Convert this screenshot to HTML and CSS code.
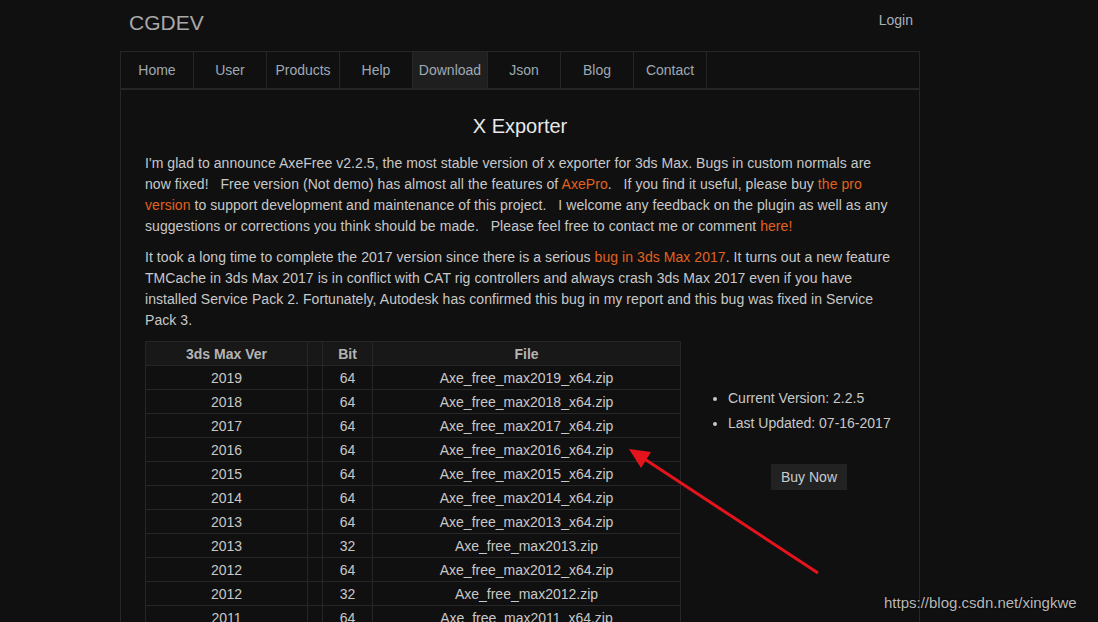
FILE: index.html
```html
<!DOCTYPE html>
<html lang="en">
<head>
  <meta charset="UTF-8" />
  <title>X Exporter - CGDEV</title>
  <link rel="stylesheet" href="styles.css">
</head>
<body>

<div class="wrap">
  <div class="header">
    <div class="logo">CGDEV</div>
    <a class="login" href="#">Login</a>
  </div>

  <div class="nav">
    <a href="#">Home</a>
    <a href="#">User</a>
    <a href="#">Products</a>
    <a href="#">Help</a>
    <a href="#" class="active">Download</a>
    <a href="#">Json</a>
    <a href="#">Blog</a>
    <a href="#">Contact</a>
  </div>

  <div class="panel">
    <h2>X Exporter</h2>
    <p>I'm glad to announce AxeFree v2.2.5, the most stable version of x exporter for 3ds Max. Bugs in custom normals are now fixed! &nbsp; Free version (Not demo) has almost all the features of <a href="#">AxePro</a>. &nbsp; If you find it useful, please buy <a href="#">the pro version</a> to support development and maintenance of this project. &nbsp; I welcome any feedback on the plugin as well as any suggestions or corrections you think should be made. &nbsp; Please feel free to contact me or comment <a href="#">here!</a></p>
    <p>It took a long time to complete the 2017 version since there is a serious <a href="#">bug in 3ds Max 2017</a>. It turns out a new feature TMCache in 3ds Max 2017 is in conflict with CAT rig controllers and always crash 3ds Max 2017 even if you have installed Service Pack 2. Fortunately, Autodesk has confirmed this bug in my report and this bug was fixed in Service Pack 3.</p>

    <div class="download">
      <table class="files">
        <tr><th class="c-ver">3ds Max Ver</th><th class="c-gap"></th><th class="c-bit">Bit</th><th>File</th></tr>
        <tr><td>2019</td><td></td><td>64</td><td>Axe_free_max2019_x64.zip</td></tr>
        <tr><td>2018</td><td></td><td>64</td><td>Axe_free_max2018_x64.zip</td></tr>
        <tr><td>2017</td><td></td><td>64</td><td>Axe_free_max2017_x64.zip</td></tr>
        <tr><td>2016</td><td></td><td>64</td><td>Axe_free_max2016_x64.zip</td></tr>
        <tr><td>2015</td><td></td><td>64</td><td>Axe_free_max2015_x64.zip</td></tr>
        <tr><td>2014</td><td></td><td>64</td><td>Axe_free_max2014_x64.zip</td></tr>
        <tr><td>2013</td><td></td><td>64</td><td>Axe_free_max2013_x64.zip</td></tr>
        <tr><td>2013</td><td></td><td>32</td><td>Axe_free_max2013.zip</td></tr>
        <tr><td>2012</td><td></td><td>64</td><td>Axe_free_max2012_x64.zip</td></tr>
        <tr><td>2012</td><td></td><td>32</td><td>Axe_free_max2012.zip</td></tr>
        <tr><td>2011</td><td></td><td>64</td><td>Axe_free_max2011_x64.zip</td></tr>
        <tr><td>2011</td><td></td><td>32</td><td>Axe_free_max2011.zip</td></tr>
      </table>

      <div class="info">
        <ul>
          <li>Current Version: 2.2.5</li>
          <li>Last Updated: 07-16-2017</li>
        </ul>
        <a class="buy" href="#">Buy Now</a>
      </div>
    </div>
  </div>
</div>

<!-- annotation drawn on top of the screenshot -->
<svg class="arrow" width="1098" height="622" viewBox="0 0 1098 622">
  <line x1="818" y1="573" x2="643" y2="458" stroke="#e5141c" stroke-width="3"/>
  <polygon points="629,449 651,452 641,468" fill="#e5141c"/>
</svg>
<div class="watermark">https://blog.csdn.net/xingkwe</div>

</body>
</html>
```

FILE: styles.css
```css
body {
  margin: 0;
  font-family: 'Liberation Sans', Arial, sans-serif;
  font-size: 14px;
  background-color: #101010;
  color: #c8c8c8;
  overflow: hidden;
}

a {
  text-decoration: none;
}

.wrap {
  width: 800px;
  margin-left: 120px;
}

.header {
  display: flex;
  justify-content: space-between;
  height: 51px;
}

.logo {
  font-size: 21px;
  color: #a8a8a8;
  padding: 11px 0 0 9px;
}

.login {
  color: #a9b0b8;
  padding: 12px 7px 0 0;
}

.nav {
  display: flex;
  height: 36px;
  border: 1px solid #262626;
  border-bottom-width: 2px;
}

.nav a {
  width: 72px;
  line-height: 36px;
  text-align: center;
  color: #9fa9b3;
  border-right: 1px solid #262626;
}

.nav a.active {
  width: 74px;
  background-color: #1f1f1f;
}

.panel {
  border-left: 1px solid #262626;
  border-right: 1px solid #262626;
  padding: 22px 24px 0;
  height: 600px;
}

.panel h2 {
  margin: 0 0 13px;
  font-size: 20px;
  line-height: 28px;
  font-weight: normal;
  text-align: center;
  color: #e8e8e8;
}

.panel p {
  margin: 0 0 10px;
  line-height: 21px;
  letter-spacing: 0.06px;
}

.panel p a {
  color: #e0621f;
}

.download {
  display: flex;
}

.files {
  width: 536px;
  flex-shrink: 0;
  border-collapse: collapse;
  border: 1px solid #262626;
}

.files th,
.files td {
  height: 23px;
  padding: 0;
  text-align: center;
  border: 1px solid #262626;
  color: #c8c8c8;
}

.files th {
  background-color: #181818;
  color: #b4b4b4;
}

.c-ver {
  width: 161px;
}

.c-gap {
  width: 14px;
}

.c-bit {
  width: 49px;
}

.info {
  flex: 1;
  white-space: nowrap;
}

.info ul {
  margin: 47px 0 0;
  padding-left: 47px;
}

.info li {
  line-height: 21px;
  margin-bottom: 4px;
}

.buy {
  display: inline-block;
  margin: 26px 0 0 90px;
  padding: 0 10px;
  line-height: 26px;
  background-color: #222;
  color: #c8ccd0;
}

.arrow {
  position: absolute;
  left: 0;
  top: 0;
}

.watermark {
  position: absolute;
  left: 884px;
  top: 594px;
  font-size: 15px;
  color: #b8b8b8;
  text-shadow: 0 0 2px #000;
}
```
